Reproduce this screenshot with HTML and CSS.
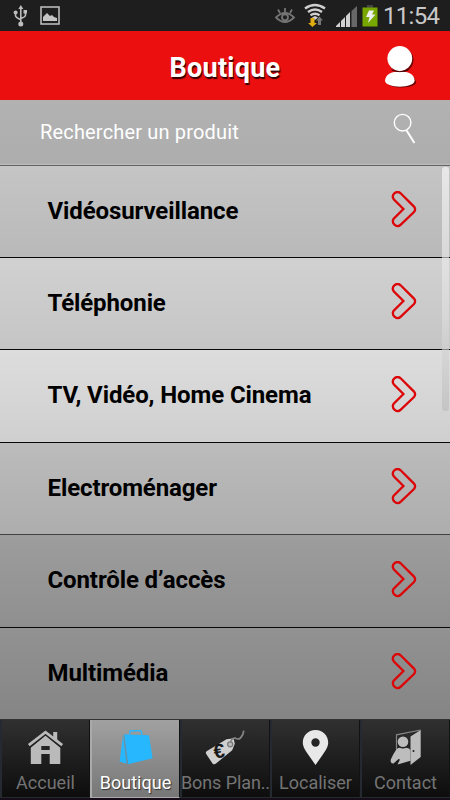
FILE: index.html
```html
<!DOCTYPE html>
<html lang="fr">
<head>
<meta charset="utf-8">
<title>Boutique</title>
<link rel="stylesheet" href="styles.css">
</head>
<body>
<svg class="defs" width="0" height="0">
  <symbol id="chevron" viewBox="0 0 26 37"><path d="M9.6 2.3 23 15.6Q25.2 18.3 23 21L9.8 33.7C6 37.5-.2 32.3 2.7 27.6L12.4 18 2.7 8.2C-.3 3.5 5.8-1.2 9.6 2.3Z" fill="none" stroke="#dc0508" stroke-width="2.3"/></symbol>
</svg>
<div class="phone">
  <div class="status">
    <svg class="usb" width="16" height="24" viewBox="0 0 16 24" fill="none" stroke="#bdbdbd" stroke-width="1.6"><path d="M7.8 3v17M2.5 8v3.5q0 2 5.3 4.2M12.500 8v3q0 2-4.700 3.500"/><g fill="#bdbdbd" stroke="none"><path d="m7.800 1 2.500 4H5.300Z"/><circle cx="2.600" cy="8.500" r="2"/><path d="M10.500 6h3.500v3.500h-3.500z"/><circle cx="7.800" cy="20" r="2.500"/></g></svg>
    <svg class="photo" width="20" height="19" viewBox="0 0 20 19"><path d="M1 1h18v17H1z" fill="none" stroke="#c4c4c4" stroke-width="1.500"/><path d="M3 15v-4l4-4 3 3 2-1 2 2 3 1v3z" fill="#c4c4c4"/></svg>
    <svg class="eye" width="20" height="16" viewBox="0 0 20 16" fill="none" stroke="#747474" stroke-width="1.800"><path d="M1 9.500q9-9 18 0-9 9-18 0ZM10 4V0M5 5 3 1.500M15 5l2-3.500"/><circle cx="10" cy="9.300" r="3"/></svg>
    <svg class="wifi" width="22" height="24" viewBox="0 0 22 24" fill="none" stroke="#d0d0d0" stroke-width="2.400"><path d="M1 5.500q10-7 20 0M4 9q7-5 14 0M6.500 12.300q4.500-3 9 0"/><path d="m8 14.500 3-1.500 3 1.500-3 2.500z" fill="#d0d0d0" stroke="none"/><path d="M6.500 15h4v5h2.500l-4.500 4L4 20h2.500z" fill="#e0ac10" stroke="none"/><path d="m15.500 13.500 3.500 4h-2V22h-3v-4.500h-2z" fill="#777" stroke="none"/></svg>
    <svg class="signal" width="21" height="21" viewBox="0 0 21 21" fill="#d0d0d0"><path d="M0 21v-1l4-4v5zM5 21v-6l4-4v10zM10 21V10l4-4v15z"/><path d="M15.500 21V5L21 0v21z" fill="#686868"/></svg>
    <svg class="battery" width="16" height="22" viewBox="0 0 16 22"><path d="M5 0h6v3H5z" fill="#454545"/><path d="M.5 2.500h15v19H.5z" fill="#78a800"/><path d="M7 5.500h5l-2 4h3.500L6 18l1.500-6H4z" fill="#eee"/></svg>
    <time class="clock">11:54</time>
  </div>
  <header class="header">
    <h1 class="title">Boutique</h1>
    <svg class="user" width="32" height="44" viewBox="0 0 32 44"><g fill="#400" opacity=".75"><circle cx="16" cy="14" r="12.500"/><path d="M1.500 35.500q3-9 14.500-9t15 9c1.500 8-29 8-29.500 0Z"/></g><g fill="#fff"><circle cx="14.800" cy="12.500" r="12.400"/><path d="M0 34.500q1-9 15-9t14.600 9c0 8.200-29.600 8.200-29.600 0Z"/></g><path d="M6.500 24q8 3.300 17 0" fill="none" stroke="#400" stroke-width="1"/></svg>
  </header>
  <div class="search">
    <span class="hint">Rechercher un produit</span>
    <svg class="loupe" width="24" height="32" viewBox="0 0 24 32" fill="none" stroke="#fff"><circle cx="9.600" cy="9.700" r="8.300" stroke-width="1.400"/><path d="m13.600 17.500 7.800 12.500" stroke-width="2"/></svg>
  </div>
  <main class="list">
    <div class="row c1"><span class="label">Vidéosurveillance</span><svg class="chev"><use href="#chevron"/></svg></div>
    <div class="row c2"><span class="label">Téléphonie</span><svg class="chev"><use href="#chevron"/></svg></div>
    <div class="row c3"><span class="label">TV, Vidéo, Home Cinema</span><svg class="chev"><use href="#chevron"/></svg></div>
    <div class="row c4"><span class="label">Electroménager</span><svg class="chev"><use href="#chevron"/></svg></div>
    <div class="row c5"><span class="label">Contrôle d’accès</span><svg class="chev"><use href="#chevron"/></svg></div>
    <div class="row c6"><span class="label">Multimédia</span><svg class="chev"><use href="#chevron"/></svg></div>
    <div class="scrollbar"></div>
  </main>
  <nav class="tabs">
    <a class="tab"><svg class="icon" width="40" height="38" viewBox="0 0 40 38" fill="#bababa"><path d="M27.200 2h4v10h-4z"/><path fill-rule="evenodd" d="M4.800 17.500 19.500 5.500l14.800 12V34H23.700V24h-8.400v10H4.800ZM15.300 16v4h8.400v-4Z"/><path d="m3.500 17.200 16-13 16 13" fill="none" stroke="#222" stroke-width="2"/><path d="m2.800 15.200 16.700-13 16.700 13" fill="none" stroke="#bababa" stroke-width="2.800"/></svg><span class="name">Accueil</span></a>
    <a class="tab active"><svg class="icon" width="40" height="38" viewBox="0 0 40 38" fill="#26b7ff"><path d="m8.300 4.300 24.700 1 3.600 23L12 34.200Z"/><path d="M7 5.300 10.500 33.700 3.700 31.500Z"/><path d="M7.700 4.500 11.300 34" fill="none" stroke="#4c94b8" stroke-width=".9"/><path d="M13.800 4V1.800q0-1 1-1h9.400q1 0 1.200 1l.5 3" fill="none" stroke="#26b7ff" stroke-width="1.400"/></svg><span class="name">Boutique</span></a>
    <a class="tab"><svg class="icon" width="44" height="38" viewBox="0 0 44 38"><path d="M3 21 22.500 9.300 28.500 8.500q1.200 0 1.400 1.200l.9 4-2.600 6.500L12 33.600q-2 1.400-3.500-.2L2.200 24q-1-1.800.8-3Z" fill="#cfcfcf"/><circle cx="26.200" cy="14.300" r="2.500" fill="#bbb" stroke="#777" stroke-width="1.300"/><path d="M27 13q-.5-4.500 4-5 3 2 5.500 0 2.800-2.500 3.300-7.300" fill="none" stroke="#858585" stroke-width="1.700"/><text class="euro" x="9.500" y="28" transform="rotate(-8 14 22)">€</text></svg><span class="name plans">Bons Plan..</span></a>
    <a class="tab"><svg class="icon" width="40" height="38" viewBox="0 0 40 38"><path fill="#e8e8e8" fill-rule="evenodd" d="M19.500 0C12 0 6.800 5.800 6.800 12.500c0 4.500 3 8.500 5.700 12.500l7 10 7-10c2.700-4 5.700-8 5.700-12.500C32.200 5.800 27 0 19.500 0Zm0 8.300a4.200 4.200 0 1 1 0 8.400 4.200 4.200 0 0 1 0-8.400Z"/></svg><span class="name">Localiser</span></a>
    <a class="tab"><svg class="icon" width="40" height="38" viewBox="0 0 40 38" fill="#bdbdbd"><path d="M10.500 24V4.800L34.500 0" fill="none" stroke="#858585" stroke-width="1.200"/><path fill-rule="evenodd" d="m34.700 0v27L24.500 35V6.500ZM27.500 20a1 1 0 1 0 0 2 1 1 0 0 0 0-2Z"/><circle cx="17" cy="11.800" r="5.300"/><path d="M10.500 19.500q1-1.500 3-1.700 3.500 1.500 7 0 3 .3 4 2.500v10.500L11.500 34.500 14 29.500l-1.500-.5-5 4.500Q4 33.500 4.800 29.500 8 22.500 10.500 19.500Z"/></svg><span class="name">Contact</span></a>
  </nav>
</div>
</body>
</html>
```

FILE: styles.css
```css
* { box-sizing: border-box; }
body { margin: 0; font-family: Roboto, sans-serif; }
.defs { position: absolute; }
.phone { width: 450px; height: 800px; display: flex; flex-direction: column; overflow: hidden; background: #111; }
.status { height: 31px; flex: none; display: flex; align-items: flex-start; background: #1e1e1e; }
.status svg { flex: none; }
.usb { margin: 4px 0 0 13px; }
.photo { margin: 6px 0 0 11px; }
.eye { margin: 8px 0 0 215px; }
.wifi { margin: 3px 0 0 9px; }
.signal { margin: 6px 0 0 10px; }
.battery { margin: 5px 0 0 5px; }
.clock { margin-left: 5px; font-size: 24px; line-height: 32px; letter-spacing: -.7px; color: #c9c9c9; white-space: nowrap; }
.header { height: 69px; flex: none; display: grid; grid-template-columns: 65px 320px 65px; align-items: center; background: #eb0f0f; }
.title { grid-column: 2; margin: 5px 0 0; text-align: center; font-size: 27px; line-height: 32px; font-weight: 700; letter-spacing: .25px; color: #fff; text-shadow: 1px 2px 1px #300; }
.user { margin: 4px 0 0; }
.search { height: 66px; flex: none; display: flex; justify-content: space-between; padding: 0 33px 0 40px; background: linear-gradient(#b2b2b2, #adadad 97%, #bcbcbc); border-bottom: 1px solid #656565; }
.hint { font-size: 20px; line-height: 64px; letter-spacing: .17px; color: #fff; }
.loupe { margin-top: 13px; }
.list { position: relative; height: 554px; flex: none; display: grid; grid-template-rows: 92px 92px 93px 92px 93px 92px; }
.row { display: flex; justify-content: space-between; align-items: flex-start; padding: 0 33px 0 47.500px; border-bottom: 1px solid #080808; }
.label { margin-top: 28px; font-size: 24px; line-height: 34px; font-weight: 700; letter-spacing: -.11px; color: #000; white-space: nowrap; }
.chev { width: 26px; height: 37px; margin-top: 25px; flex: none; }
.c1 { background: linear-gradient(#c5c5c5, #b9b9b9); }
.c2 { background: linear-gradient(#d1d1d1, #c5c5c5); }
.c3 { background: linear-gradient(#dddddd, #cfcfcf); }
.c4 { background: linear-gradient(#bcbcbc, #adadad); border-color: #414141; }
.c5 { background: linear-gradient(#9d9d9d, #8f8f8f); }
.c6 { background: linear-gradient(#929292, #858585); border-color: #333; }
.c3 .chev, .c5 .chev { margin-top: 26px; }
.scrollbar { position: absolute; top: 1px; left: 442px; width: 7px; height: 244px; border-radius: 3px; background: linear-gradient(rgba(255,255,255,.6), rgba(225,225,225,.6) 60%, rgba(185,185,185,.6)); }
.tabs { height: 80px; flex: none; display: grid; grid-template-columns: repeat(5, 90px); background: #252a2e; border-bottom: 2px solid #170d18; }
.tab { display: flex; flex-direction: column; align-items: center; min-width: 0; height: 77px; padding-top: 10px; border-left: 2px solid #252a30; border-right: 1px solid #101214; background: linear-gradient(#303030, #0d0d0d); color: #747474; }
.tab.active { height: 78px; background: linear-gradient(#a1a1a1, #777); border-left-color: #aaa; border-bottom: 1px solid #aaa; color: #fff; }
.tab.active .name { text-shadow: 1px 1px 1px #333; }
.icon { flex: none; height: 38px; overflow: visible; }
.name { margin-top: 3px; font-size: 18px; line-height: 24px; white-space: nowrap; }
.name.plans { letter-spacing: -.1px; }
.euro { font: 700 20px "Liberation Sans", sans-serif; fill: #181818; }
```
